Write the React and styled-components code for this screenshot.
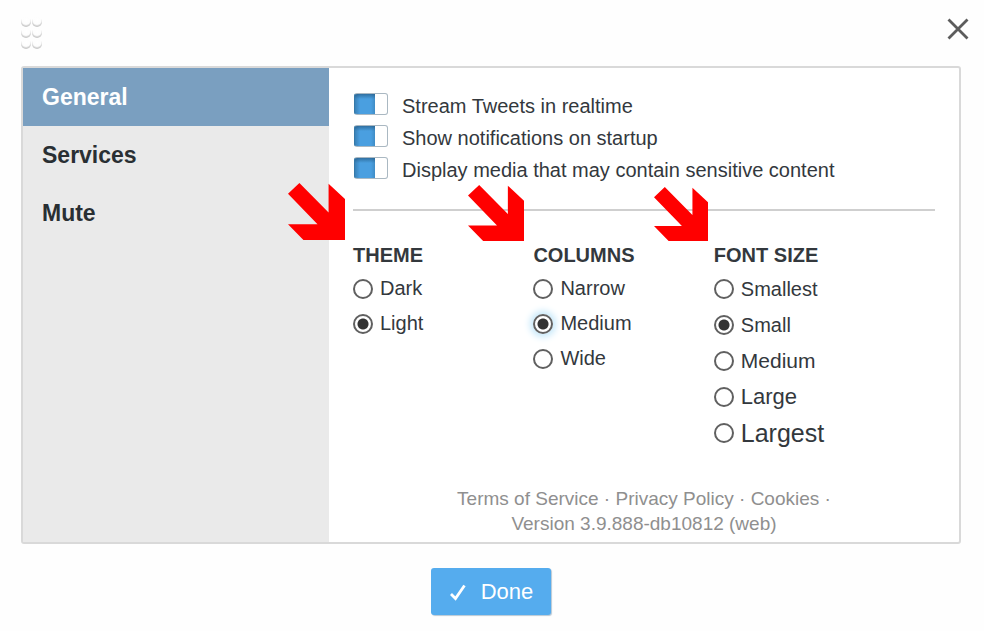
import { useState } from 'react';
import styled, { createGlobalStyle } from 'styled-components';

const tabs = ['General', 'Services', 'Mute'];

const switches = [
    { id: 'stream', label: 'Stream Tweets in realtime' },
    { id: 'notifications', label: 'Show notifications on startup' },
    { id: 'media', label: 'Display media that may contain sensitive content' },
];

const groups = [
    {
        name: 'theme',
        title: 'THEME',
        selected: 'Light',
        rowHeight: 35,
        arrow: { left: -65, top: -88, size: 57 },
        options: [{ label: 'Dark' }, { label: 'Light' }],
    },
    {
        name: 'columns',
        title: 'COLUMNS',
        selected: 'Medium',
        rowHeight: 35,
        arrow: { left: -65, top: -86, size: 56 },
        options: [{ label: 'Narrow' }, { label: 'Medium', glow: true }, { label: 'Wide' }],
    },
    {
        name: 'font-size',
        title: 'FONT SIZE',
        selected: 'Small',
        rowHeight: 36,
        arrow: { left: -60, top: -84, size: 54 },
        options: [
            { label: 'Smallest' },
            { label: 'Small' },
            { label: 'Medium', size: 21 },
            { label: 'Large', size: 22 },
            { label: 'Largest', size: 25 },
        ],
    },
];

const Grip = () => (
    <svg width="24" height="36" viewBox="0 0 24 36" aria-hidden="true">
        <defs>
            <radialGradient id="ball" cx="50%" cy="34%" r="66%">
                <stop offset="0%" stopColor="#fff" />
                <stop offset="60%" stopColor="#fdfdfd" />
                <stop offset="84%" stopColor="#cfcfcf" />
                <stop offset="100%" stopColor="#c4c4c4" />
            </radialGradient>
            <filter id="soft">
                <feGaussianBlur stdDeviation="0.5" />
            </filter>
        </defs>
        {[7, 18, 29].map((y) => [5, 16].map((x) => (
            <circle key={`${x}-${y}`} cx={x} cy={y} r="5" fill="url(#ball)" filter="url(#soft)" />
        )))}
    </svg>
);

const RadioGroup = ({ name, title, selected, rowHeight, arrow, options }) => {
    const [value, setValue] = useState(selected);

    return (
        <Group>
            <Legend>{title}</Legend>
            {options.map(({ label, size, glow }) => (
                <Option key={label} $height={rowHeight} $size={size}>
                    <Radio
                        type="radio"
                        name={name}
                        checked={value === label}
                        onChange={() => setValue(label)}
                        $glow={glow}
                    />
                    {label}
                </Option>
            ))}
            <Arrow viewBox="0 0 170 170" $left={arrow.left} $top={arrow.top} $size={arrow.size} aria-hidden="true">
                <polygon points="0,32 34,0 121,88 121,2 170,48 170,170 46,170 0,123 88,123" fill="#f00" />
            </Arrow>
        </Group>
    );
};

const App = () => {
    const [tab, setTab] = useState('General');

    return (
        <Dialog>
            <GlobalStyle />
            <Header>
                <Grip />
                <CloseButton type="button" aria-label="Close">
                    <svg width="22" height="22" viewBox="0 0 22 22">
                        <path d="M1.5 1.5L20.5 20.5M20.5 1.5L1.5 20.5" stroke="#5c5c5c" strokeWidth="2.8" />
                    </svg>
                </CloseButton>
            </Header>
            <Panel>
                <Nav>
                    {tabs.map((name) => (
                        <Tab key={name} type="button" $active={name === tab} onClick={() => setTab(name)}>
                            {name}
                        </Tab>
                    ))}
                </Nav>
                <Content>
                    {switches.map(({ id, label }) => (
                        <SwitchRow key={id}>
                            <Switch type="checkbox" id={id} defaultChecked />
                            <label htmlFor={id}>{label}</label>
                        </SwitchRow>
                    ))}
                    <Divider />
                    <Groups>
                        {groups.map((group) => <RadioGroup key={group.name} {...group} />)}
                    </Groups>
                    <Legal>
                        <a href="#terms">Terms of Service</a> · <a href="#privacy">Privacy Policy</a> · <a href="#cookies">Cookies</a> ·
                        <br />
                        Version 3.9.888-db10812 (web)
                    </Legal>
                </Content>
            </Panel>
            <Footer>
                <DoneButton type="button">
                    <svg width="18" height="18" viewBox="0 0 18 18" aria-hidden="true">
                        <path d="M2 11L6.5 15.5L15.5 2.5" fill="none" stroke="#fff" strokeWidth="2.8" />
                    </svg>
                    Done
                </DoneButton>
            </Footer>
        </Dialog>
    );
};

const GlobalStyle = createGlobalStyle`
    * {
        box-sizing: border-box;
    }

    body {
        margin: 0;
        background: #fefefe;
        color: #33383d;
        font-family: "Liberation Sans", Arial, sans-serif;
        font-size: 20px;
    }

    button, input {
        font: inherit;
    }
`;

const Dialog = styled.div`
    padding: 0 23px 0 21px;
`;

const Header = styled.header`
    display: flex;
    justify-content: space-between;
    align-items: flex-start;
    height: 66px;
    padding-top: 15px;
`;

const CloseButton = styled.button`
    display: flex;
    margin: 3px -8px 0 0;
    padding: 0;
    border: 0;
    background: none;
    cursor: pointer;
`;

const Panel = styled.main`
    display: flex;
    border: 2px solid #d9d9d9;
    border-radius: 3px;
    background: #fff;
`;

const Nav = styled.nav`
    flex: 0 0 306px;
    background: #eaeaea;
`;

const Tab = styled.button`
    display: block;
    width: 100%;
    height: 58px;
    padding: 0 19px;
    border: 0;
    background: ${(props) => (props.$active ? '#7a9fc0' : 'transparent')};
    color: ${(props) => (props.$active ? '#fff' : '#292f33')};
    font-size: 23px;
    font-weight: bold;
    text-align: left;
    cursor: pointer;
`;

const Content = styled.section`
    flex: 1;
    padding: 22px 24px 6px;
`;

const SwitchRow = styled.div`
    display: flex;
    gap: 14px;
    padding-left: 1px;
    line-height: 32px;
`;

const Switch = styled.input`
    appearance: none;
    flex: none;
    width: 34px;
    height: 22px;
    margin: 3px 0 0;
    border: 1px solid #aab8c2;
    border-radius: 3px;
    background: #fff;
    cursor: pointer;

    &:checked {
        border-left-color: #3579a9;
        background:
            linear-gradient(to bottom, rgba(30, 80, 120, 0.6), transparent 5px) 0 0 / 20px 100% no-repeat,
            linear-gradient(to right, #3a82b8, #4a9fe0 5px, #4a9fe0 16px, #3f8cc5 20px) 0 0 / 20px 100% no-repeat,
            #fff;
    }
`;

const Divider = styled.hr`
    height: 2px;
    margin: 23px 0 28px;
    border: 0;
    background: #cfcfcf;
`;

const Groups = styled.div`
    display: grid;
    grid-template-columns: repeat(3, 31%);
`;

const Group = styled.fieldset`
    position: relative;
    min-width: 0;
    margin: 0;
    padding: 0;
    border: 0;
`;

const Legend = styled.legend`
    padding: 0;
    font-weight: bold;
    line-height: 32px;
`;

const Option = styled.label`
    display: flex;
    align-items: center;
    gap: 7px;
    height: ${(props) => props.$height}px;
    font-size: ${(props) => props.$size || 20}px;
`;

const Radio = styled.input`
    appearance: none;
    flex: none;
    width: 20px;
    height: 20px;
    margin: 0;
    border: 2px solid #606060;
    border-radius: 50%;
    background: #fff;
    box-shadow: ${(props) => (props.$glow ? '0 0 7px 3px #c4e7f9' : 'none')};

    &:checked {
        background: radial-gradient(circle, #333 5px, #fff 6px);
    }
`;

const Arrow = styled.svg`
    position: absolute;
    left: ${(props) => props.$left}px;
    top: ${(props) => props.$top}px;
    width: ${(props) => props.$size}px;
    height: ${(props) => props.$size}px;
`;

const Legal = styled.p`
    margin: 35px 0 0;
    color: #8f8f8f;
    font-size: 19px;
    line-height: 25px;
    text-align: center;

    a {
        color: inherit;
        text-decoration: none;
    }
`;

const Footer = styled.footer`
    display: flex;
    justify-content: center;
    padding: 24px 0 16px;
`;

const DoneButton = styled.button`
    display: flex;
    align-items: center;
    gap: 14px;
    height: 47px;
    padding: 0 18px;
    border: 0;
    border-radius: 3px;
    background: #55acee;
    box-shadow: 1px 1px 1px #b9c8d4;
    color: #fff;
    font-size: 22px;
    cursor: pointer;
`;

export default App;
